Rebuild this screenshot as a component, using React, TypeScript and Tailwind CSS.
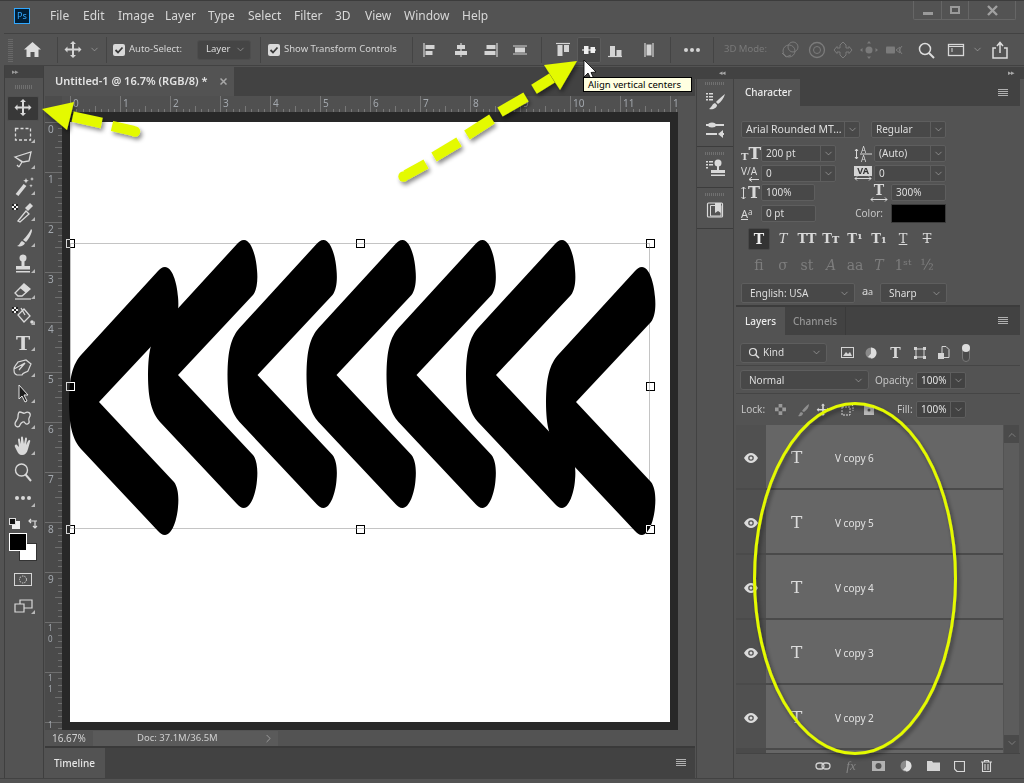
import { ChevronDown, ChevronRight, ChevronUp } from "lucide-react";
import type { ReactNode } from "react";

const menu = [
  { label: "File", w: "w-[33px]" },
  { label: "Edit", w: "w-[35px]" },
  { label: "Image", w: "w-[47px]" },
  { label: "Layer", w: "w-[43px]" },
  { label: "Type", w: "w-[40px]" },
  { label: "Select", w: "w-[46px]" },
  { label: "Filter", w: "w-[41px]" },
  { label: "3D", w: "w-[30px]" },
  { label: "View", w: "w-[39px]" },
  { label: "Window", w: "w-[58px]" },
  { label: "Help", w: "w-[40px]" },
];

// all little drawings are centred on 0,0
function Ico({ size = 26, className = "", children }: { size?: number; className?: string; children: ReactNode }) {
  const h = size / 2;
  return (
    <svg width={size} height={size} viewBox={`${-h} ${-h} ${size} ${size}`} className={className} fill="currentColor">
      {children}
    </svg>
  );
}

const Corner = () => <path d="M12 5v4h-4z" fill="#b8b8b8" />;
const Checker = ({ x, y }: { x: number; y: number }) => (
  <g>
    <rect x={x} y={y} width="6" height="6" fill="#eee" />
    <path d={`M${x} ${y}h2v2h-2zM${x + 4} ${y}h2v2h-2zM${x + 2} ${y + 2}h2v2h-2zM${x} ${y + 4}h2v2h-2zM${x + 4} ${y + 4}h2v2h-2z`} fill="#222" />
  </g>
);

const moveArrows = "M0-9l-3 3h2v4.500h-4.500v-2l-3 3 3 3v-2h4.500v4.500h-2l3 3 3-3h-2v-4.500h4.500v2l3-3-3-3v2h-4.500v-4.500h2z";

const tools: ReactNode[] = [
  <path d={moveArrows} />,
  <>
    <rect x="-7.500" y="-5.500" width="15" height="11.500" fill="none" stroke="currentColor" strokeWidth="1.300" strokeDasharray="3 2" />
    <Corner />
  </>,
  <>
    <path d="M-8-3 L8-8 L6 1 L0 2 Z M-8-3 L-1 2 L-4 7 M-4 7l-2-2" fill="none" stroke="currentColor" strokeWidth="1.300" />
    <Corner />
  </>,
  <>
    <path d="M-6 9 L2-1" stroke="currentColor" strokeWidth="3.500" />
    <path d="M3-8l.8 2 2 .8-2 .8-.8 2-.8-2-2-.8 2-.8zM9-9l.6 1.400 1.400.6-1.400.6-.6 1.400-.6-1.400-1.400-.6 1.400-.6zM8-2l.5 1.200 1.200.5-1.200.5-.5 1.200-.5-1.200-1.200-.5 1.200-.5z" />
    <Corner />
  </>,
  <>
    <path d="M-5 9 L3-1 L6 2 L-3 10 Z" fill="none" stroke="currentColor" strokeWidth="1.300" />
    <path d="M2-4 L7-9 L10-6 L5-1 Z" />
    <Checker x={-11} y={-8} />
    <Corner />
  </>,
  <>
    <path d="M8-9 C7-6 3-1 0 2 L3 4 C6 1 9-5 9-8Z M-1 3 C-3 4-3 7-6 8 C-3 9 1 8 2 5Z" />
    <Corner />
  </>,
  <>
    <circle cx="0" cy="-6" r="3.500" />
    <rect x="-1.500" y="-3" width="3" height="5" />
    <rect x="-7" y="2" width="14" height="3.500" />
    <rect x="-7" y="7" width="14" height="1.500" />
    <Corner />
  </>,
  <>
    <path d="M-8 3 L1-6 L7-1 L-1 6 L-5 6 Z" fill="none" stroke="currentColor" strokeWidth="1.300" />
    <path d="M-3-2 L1-6 L7-1 L3 3 Z" />
    <path d="M-8 9h16" stroke="currentColor" strokeWidth="1.200" />
    <Corner />
  </>,
  <>
    <path d="M-5-1 L1-7 L7 0 L1 6 Z M2-1 L-2-8" fill="none" stroke="currentColor" strokeWidth="1.300" />
    <circle cx="9" cy="6" r="1.800" />
    <Checker x={-11} y={-9} />
    <Corner />
  </>,
  <>
    <text x="0" y="8" textAnchor="middle" className="[font-family:'DejaVu_Serif',serif] font-bold text-[19px]">T</text>
    <Corner />
  </>,
  <>
    <path d="M-9 1 C-9-2-6-4-5-6 L3-8 L8-4 L5 3 C3 5 0 4-1 7 L-6 7 C-9 6-9 4-9 1Z M-9 1 L2-5 M-4 2 L2-5" fill="none" stroke="currentColor" strokeWidth="1.200" />
    <Corner />
  </>,
  <>
    <path d="M-4-9 L-4 5 L-1 2 L2 8 L4 7 L1 1 L5 1 Z" fill="#1d1d1d" stroke="#e4e4e4" strokeWidth="1" />
    <Corner />
  </>,
  <>
    <path d="M-3-8 C-1-8 0-6 2-7 C5-9 8-7 7-4 C6-2 5-1 6 1 C7 4 3 5 2 3 C1 1-2 2-3 5 C-4 8-8 7-8 4 C-8 1-5 0-5-3 C-5-5-5-8-3-8Z" fill="none" stroke="currentColor" strokeWidth="1.300" />
    <Corner />
  </>,
  <>
    <path d="M-8 1 C-9-1-7-2-6-1 L-4 1 L-5-6 C-5-8-3-8-3-6 L-2-2 L-2-8 C-2-10 0-10 0-8 L1-2 L2-7 C2-9 4-9 4-7 L3-1 L5-5 C6-7 8-6 7-4 L5 3 C4 7 2 9-1 9 C-4 9-5 7-6 5Z" />
    <Corner />
  </>,
  <>
    <circle cx="-1.500" cy="-2" r="6" fill="none" stroke="currentColor" strokeWidth="1.400" />
    <path d="M3-2 M2.500 2.500 L8 9" stroke="currentColor" strokeWidth="2" />
  </>,
  <>
    <circle cx="-6" cy="0" r="2" />
    <circle cx="0" cy="0" r="2" />
    <circle cx="6" cy="0" r="2" />
    <Corner />
  </>,
];

function AlignIcon({ d, line }: { d: string; line: string }) {
  return (
    <Ico size={20}>
      <path d={line} stroke="currentColor" strokeWidth="1.200" fill="none" />
      <path d={d} />
    </Ico>
  );
}

function Sep() {
  return <div className="w-px h-[26px] bg-[#444444] shrink-0" />;
}

function Check({ className = "" }: { className?: string }) {
  return (
    <div className={`w-[12px] h-[12px] rounded-[2px] bg-[#d9d9d9] flex items-center justify-center shrink-0 ${className}`}>
      <svg width="10" height="10" viewBox="0 0 10 10"><path d="M1.500 5l2.500 2.500 4.500-5" fill="none" stroke="#3a3a3a" strokeWidth="1.800" /></svg>
    </div>
  );
}

function Chev({ className = "" }: { className?: string }) {
  return <ChevronDown size={11} strokeWidth={1.300} className={`text-[#b5b5b5] ${className}`} />;
}

function Select({ w, h = "h-[17px]", children, split = true }: { w: string; h?: string; children: ReactNode; split?: boolean }) {
  return (
    <div className={`${w} ${h} flex items-center shrink-0 rounded-[2px] border border-[#5e5e5e] bg-[#484848] text-[#dedede]`}>
      <div className="flex-1 min-w-0 pl-[4px] truncate flex items-center">{children}</div>
      <div className={`w-[15px] h-full flex items-center justify-center ${split ? "border-l border-[#5e5e5e]" : ""}`}>
        <Chev />
      </div>
    </div>
  );
}

function Field({ w, children }: { w: string; children: ReactNode }) {
  return <div className={`${w} h-[17px] flex items-center shrink-0 pl-[4px] rounded-[2px] border border-[#5e5e5e] bg-[#484848] text-[#dedede]`}>{children}</div>;
}

function Slab({ size, className = "" }: { size: string; className?: string }) {
  return <span className={`[font-family:'DejaVu_Serif',serif] font-bold leading-none ${size} ${className}`}>T</span>;
}

function PanelMenu() {
  return (
    <svg width="12" height="8" viewBox="0 0 12 8" className="text-[#b0b0b0]">
      <path d="M1 .5h10M1 2.500h10M1 4.500h10M1 6.500h10" stroke="currentColor" />
    </svg>
  );
}

function Eye() {
  return (
    <svg width="14" height="10" viewBox="0 0 14 10">
      <path d="M0 5C2 1.500 4.500 0 7 0s5 1.500 7 5c-2 3.500-4.500 5-7 5S2 8.500 0 5z" fill="#dcdcdc" />
      <circle cx="7" cy="5" r="2.800" fill="#535353" />
      <circle cx="7" cy="5" r="1.500" fill="#dcdcdc" />
    </svg>
  );
}

function TopRuler() {
  const ticks = Array.from({ length: 100 }, (_, i) => i);
  return (
    <svg width="616" height="17" className="block bg-[#505050]">
      <path d="M0 16.500h616" stroke="#3c3c3c" />
      {ticks.map((i) => {
        const x = Math.round(8 + i * 6.25) + 0.5;
        const major = i % 8 === 0;
        const mid = i % 4 === 0;
        return <path key={i} d={`M${x} ${major ? 0 : mid ? 10 : 13}V16`} stroke="#777777" />;
      })}
      {["0", "1", "2", "3", "4", "5", "6", "7", "8", "9", "10", "11", "1"].map((t, i) => (
        <text key={i} x={8 + i * 50 + 3} y="11" fontSize="10" fill="#a3a8ae">{t}</text>
      ))}
    </svg>
  );
}

function LeftRuler() {
  const ticks = Array.from({ length: 100 }, (_, i) => i);
  return (
    <svg width="17" height="618" className="block bg-[#4a4a4a] shrink-0">
      {ticks.map((i) => {
        const y = Math.round(10 + i * 6.25) + 0.5;
        const major = i % 8 === 0;
        const mid = i % 4 === 0;
        return <path key={i} d={`M${major ? 0 : mid ? 10 : 13} ${y}H17`} stroke="#6e6e6e" />;
      })}
      {["0", "1", "2", "3", "4", "5", "6", "7", "8", "9"].map((t, i) => (
        <text key={i} x="3" y={10 + i * 50 + 11} fontSize="10" fill="#a3a8ae">{t}</text>
      ))}
      {[10, 11].map((n) => (
        <g key={n}>
          <text x="3" y={10 + n * 50 + 9} fontSize="8" fill="#a3a8ae">1</text>
          <text x="3" y={10 + n * 50 + 20} fontSize="8" fill="#a3a8ae">{n - 10}</text>
        </g>
      ))}
      <text x="3" y="616" fontSize="8" fill="#a3a8ae">1</text>
    </svg>
  );
}

const chevron =
  "M0 0 L75-80 C79-85 80-95 79-105 C78-120 73-135 66-135 C63-135 61-133 59-131 L-18-47 C-26-38-30-25-30 0 C-30 25-26 38-18 47 L59 129 C61 131 63 133 66 133 C73 133 78 118 79 105 C80 95 79 85 75 80 Z";

function Chevrons() {
  const places = [
    [29, 280],
    [108, 253],
    [187.500, 253],
    [266.500, 253],
    [346.500, 253],
    [426, 253],
    [506, 280],
  ];
  return (
    <svg width="600" height="600" className="absolute left-0 top-0 overflow-visible">
      {places.map(([x, y]) => (
        <path key={x} d={chevron} transform={`translate(${x} ${y})`} fill="#000" />
      ))}
    </svg>
  );
}

function Handle({ className }: { className: string }) {
  return <div className={`absolute w-[9px] h-[9px] border border-white mix-blend-difference ${className}`} />;
}

function LayerRow({ name }: { name: string }) {
  return (
    <div className="flex h-[65px] shrink-0">
      <div className="w-[30px] h-[63px] flex items-center justify-center pt-[3px] bg-[#505050]"><Eye /></div>
      <div className="w-[237px] h-[63px] bg-[#666666] flex items-center pt-[3px]">
        <span className="w-[69px] pl-[25px] [font-family:'DejaVu_Serif',serif] text-[17px] text-[#dcdcdc]">T</span>
        <span className="text-[10px] text-[#e2e2e2]">{name}</span>
      </div>
    </div>
  );
}

function Annotations() {
  const dashes = [
    "M72.700 116.700L101.700 123",
    "M112 126L134 131",
    "M534 89.300L552 78",
    "M500 112L526 97",
    "M467 135L492 119",
    "M434 157L459 142",
    "M426 164L406 175",
  ];
  return (
    <svg width="1024" height="783" className="absolute left-0 top-0 pointer-events-none">
      <defs>
        <filter id="sh" x="-20%" y="-20%" width="140%" height="140%">
          <feDropShadow dx="2" dy="3" stdDeviation="2" floodColor="#000" floodOpacity="0.45" />
        </filter>
      </defs>
      <g filter="url(#sh)">
        <path d="M42 109L74 102L67 130Z" fill="#e4fa00" />
        <path d="M577 61L544 65L560 90Z" fill="#e4fa00" />
        {dashes.map((d) => (
          <path key={d} d={d} stroke="#e4fa00" strokeWidth="10.500" fill="none" />
        ))}
        <circle cx="403.500" cy="176.500" r="5.200" fill="#e4fa00" />
        <circle cx="135" cy="131.500" r="5.200" fill="#e4fa00" />
        <ellipse cx="855" cy="578.500" rx="100.500" ry="175" fill="none" stroke="#e4fa00" strokeWidth="3" />
      </g>
      <path d="M584 60V77L588 73L591.500 80L594 79L591 72.500L596 72Z" fill="#fff" stroke="#000" strokeWidth="0.800" />
    </svg>
  );
}

export default function App() {
  return (
    <div className="relative w-[1024px] h-[783px] overflow-hidden bg-[#535353] text-[#d9d9d9] text-[10px] [font-family:'Noto_Sans',sans-serif]">
      {/* menu bar */}
      <div className="h-[33px] flex items-center border-t border-[#3c3c3c] relative">
        <div className="ml-[14px] w-[16px] h-[16px] mt-[-2px] border border-[#31a8ff] bg-[#001e36] text-[#31a8ff] text-[9px] leading-[14px] text-center shrink-0">Ps</div>
        <div className="ml-[20px] flex items-center text-[12px] text-[#d8d8d8] mt-[-2px]">
          {menu.map((m) => (
            <span key={m.label} className={`${m.w} shrink-0`}>{m.label}</span>
          ))}
        </div>
        <div className="absolute right-[8px] top-0 h-[19px] flex border-x border-b border-[#666666] rounded-b-[2px]">
          <div className="w-[28px] flex items-center justify-center border-r border-[#666666]"><div className="w-[10px] h-[3px] mt-[6px] bg-[#9a9a9a]" /></div>
          <div className="w-[27px] flex items-center justify-center border-r border-[#666666]"><div className="w-[10px] h-[8px] border-2 border-[#9a9a9a]" /></div>
          <div className="w-[46px] flex items-center justify-center text-[#a0a0a0]">
            <svg width="11" height="11" viewBox="0 0 11 11"><path d="M1 1l9 9M10 1l-9 9" stroke="currentColor" strokeWidth="2.400" /></svg>
          </div>
        </div>
      </div>

      {/* options bar */}
      <div className="ml-[4px] h-[33px] flex items-center border-y border-[#424242] text-[#d4d4d4] text-[9.5px]">
        <div className="w-[13px] h-[24px] pl-[4px] shrink-0"><div className="w-[5px] h-full bg-[repeating-linear-gradient(0deg,#686868_0_1px,transparent_1px_2px)]" /></div>
        <div className="w-[30px] flex justify-center shrink-0">
          <svg width="17" height="15" viewBox="0 0 17 15"><path d="M8.500 0L0 7.500h2.500V15h4v-5h4v5h4V7.500H17z" fill="#dcdcdc" /></svg>
        </div>
        <div className="w-[10px] shrink-0" />
        <Sep />
        <div className="w-[30px] flex justify-center shrink-0"><Ico size={20}><path d={moveArrows} /></Ico></div>
        <div className="w-[12px] flex justify-center shrink-0"><Chev className="text-[#999999]" /></div>
        <div className="w-[6px] shrink-0" />
        <Sep />
        <Check className="ml-[6px]" />
        <span className="ml-[4px] w-[60px] shrink-0 whitespace-nowrap">Auto-Select:</span>
        <div className="ml-[8px] w-[54px] h-[20px] shrink-0 flex items-center justify-between pl-[8px] pr-[4px] rounded-[3px] border border-[#4d4d4d] bg-[#454545]">
          <span className="text-[#dedede]">Layer</span>
          <Chev />
        </div>
        <div className="w-[9px] shrink-0" />
        <Sep />
        <Check className="ml-[7px]" />
        <span className="ml-[4px] w-[122px] shrink-0 whitespace-nowrap">Show Transform Controls</span>
        <div className="w-[6px] shrink-0" />
        <Sep />
        <div className="w-[2px] shrink-0" />
        <div className="w-[30px] flex justify-center shrink-0"><AlignIcon line="M-6-7V7" d="M-4.500-5h9v4h-9zM-4.500 1h7v4h-7z" /></div>
        <div className="w-[31px] flex justify-center shrink-0"><AlignIcon line="M0-7V7" d="M-4-5h8v4h-8zM-6 1h12v4h-12z" /></div>
        <div className="w-[29px] flex justify-center shrink-0"><AlignIcon line="M6-7V7" d="M-4.500-5h9v4h-9zM-6.500 1h11v4h-11z" /></div>
        <div className="w-[30px] flex justify-center shrink-0"><AlignIcon line="M-7-4h14M-7 4h14" d="M-5-2.500h10v5h-10z" /></div>
        <div className="w-[6px] shrink-0" />
        <Sep />
        <div className="ml-[8px] w-[26px] flex justify-center shrink-0"><AlignIcon line="M-7-6.500h14" d="M-5.500-5h5v11h-5zM1-5h5v7h-5z" /></div>
        <div className="ml-[1px] w-[24px] h-[26px] flex items-center justify-center shrink-0 rounded-[2px] border border-[#5c5c5c] bg-[#474747] text-[#f0f0f0]"><AlignIcon line="M-7 0h14" d="M-5-4h4.500v8h-4.500zM1.500-3h4.500v6h-4.500z" /></div>
        <div className="ml-[1px] w-[26px] flex justify-center shrink-0"><AlignIcon line="M-7 6.500h14" d="M-5-4h5v10h-5zM1.500 0h5v6h-5z" /></div>
        <div className="ml-[8px] w-[26px] flex justify-center shrink-0"><AlignIcon line="M-4-7V7M4-7V7" d="M-2.500-5.500h5v11h-5z" /></div>
        <div className="w-[8px] shrink-0" />
        <Sep />
        <div className="w-[42px] flex justify-center shrink-0"><Ico size={20}><circle cx="-6" r="2" /><circle r="2" /><circle cx="6" r="2" /></Ico></div>
        <Sep />
        <span className="ml-[10px] w-[54px] shrink-0 text-[#797979] whitespace-nowrap">3D Mode:</span>
        <div className="flex text-[#7b7b7b]">
          <div className="w-[26px] flex justify-center"><Ico size={22} ><circle cx="-2" cy="1" r="6" fill="none" stroke="currentColor" /><circle cx="2" cy="-3" r="5" fill="none" stroke="currentColor" /><path d="M-9 3l4 4 5-2" fill="none" stroke="currentColor" /></Ico></div>
          <div className="w-[26px] flex justify-center"><Ico size={22}><circle r="7.500" fill="none" stroke="currentColor" strokeWidth="1.300" /><circle r="3.500" fill="none" stroke="currentColor" /></Ico></div>
          <div className="w-[26px] flex justify-center"><Ico size={22}><path d="M0-8l-3 3v3h-3v-1.500l-3 3.500 3 3.500V2h3v3l3 3 3-3V2h3v1.500l3-3.500-3-3.500V-2H3v-3z" fill="none" stroke="currentColor" /></Ico></div>
          <div className="w-[26px] flex justify-center"><Ico size={22}><circle r="3.500" /><path d="M0-9l-2 2.500h4zM0 9l-2-2.500h4zM-9 0l2.500-2v4zM9 0l-2.500-2v4z" /></Ico></div>
          <div className="w-[26px] flex justify-center"><Ico size={22}><rect x="-9" y="-3.500" width="9" height="7" rx="1" /><path d="M1 0l4-3v6zM7-4l-3 4 3 4" fill="none" stroke="currentColor" /></Ico></div>
        </div>
        <div className="w-[36px] flex justify-center shrink-0">
          <Ico size={20} className="text-[#dddddd]"><circle cx="-1" cy="-1" r="5.500" fill="none" stroke="currentColor" strokeWidth="1.500" /><path d="M3-.5 M3 3l5 5" stroke="currentColor" strokeWidth="2" /></Ico>
        </div>
        <div className="w-[24px] flex justify-center shrink-0">
          <Ico size={20} className="text-[#d8d8d8]"><rect x="-7.500" y="-5.500" width="15" height="11" fill="none" stroke="currentColor" strokeWidth="1.300" /><path d="M-7.500-3.500h15" stroke="currentColor" /><path d="M-5-1.500h2v1h-2zM-5 .5h2v1h-2z" /></Ico>
        </div>
        <div className="w-[18px] flex justify-center shrink-0"><Chev /></div>
        <div className="w-[28px] flex justify-center shrink-0">
          <Ico size={20} className="text-[#dcdcdc]"><path d="M-4-2h-3V8H7V-2H4" fill="none" stroke="currentColor" strokeWidth="1.500" /><path d="M0 3V-7M-3-4l3-3.500L3-4" fill="none" stroke="currentColor" strokeWidth="1.500" /></Ico>
        </div>
      </div>

      {/* workspace */}
      <div className="flex h-[713px] border-b border-[#424242]">
        {/* tools */}
        <div className="ml-[4px] w-[40px] shrink-0 flex flex-col border-x border-[#3f3f3f]">
          <div className="h-[12px] bg-[#424242] pl-[7px] text-[#999999] text-[7px] leading-[11px] tracking-[-1px] shrink-0">▸▸</div>
          <div className="h-[17px] flex items-center justify-center shrink-0"><div className="w-[18px] h-[4px] bg-[repeating-linear-gradient(90deg,#707070_0_1px,transparent_1px_2px)]" /></div>
          <div className="flex flex-col items-center pr-[2px]">
            {tools.map((t, i) => (
              <div key={i} className="h-[26px] w-full flex items-center justify-center">
                <div className={`h-[25px] w-[32px] flex items-center justify-center rounded-[2px] ${i === 0 ? "bg-[#383838] border border-[#505050]" : ""}`}>
                  <Ico className="shrink-0">{t}</Ico>
                </div>
              </div>
            ))}
          </div>
          <div className="mt-[2px] h-[20px] flex items-center justify-center gap-[8px] pr-[1px]">
            <svg width="11" height="11" viewBox="0 0 11 11"><rect x="3" y="3" width="8" height="8" fill="#eee" /><rect x=".5" y=".5" width="6" height="6" fill="#111" stroke="#ddd" /></svg>
            <svg width="11" height="11" viewBox="0 0 11 11"><path d="M1 3h8M3 1L1 3l2 2M7 10V3M5 8l2 2 2-2" fill="none" stroke="#ddd" strokeWidth="1.200" /></svg>
          </div>
          <div className="relative h-[29px] mt-[1px] ml-[4px]">
            <div className="absolute left-[10px] top-[9px] w-[18px] h-[18px] bg-white border border-[#333333]" />
            <div className="absolute left-0 top-[-1px] w-[18px] h-[18px] bg-black border border-white" />
          </div>
          <div className="mt-[3px] h-[26px] flex items-center justify-center pr-[2px]">
            <svg width="18" height="13" viewBox="0 0 18 13"><rect x=".5" y=".5" width="17" height="12" fill="none" stroke="#d6d6d6" /><circle cx="9" cy="6.500" r="3.500" fill="none" stroke="#d6d6d6" strokeDasharray="1.500 1" /></svg>
          </div>
          <div className="h-[26px] flex items-center justify-center pr-[2px]">
            <Ico><path d="M-8-1h9v8h-9zM-3-1v-4h12v8h-8" fill="none" stroke="currentColor" strokeWidth="1.200" /><Corner /></Ico>
          </div>
        </div>

        {/* document */}
        <div className="w-[651px] pl-px shrink-0 flex flex-col">
          <div className="h-[29px] shrink-0 bg-[#424242] flex mt-px">
            <div className="w-[189px] bg-[#535353] flex items-center pl-[10px] text-[11px] font-semibold text-[#e3e3e3]">
              <span className="w-[165px] whitespace-nowrap">Untitled-1 @ 16.7% (RGB/8) *</span>
              <svg width="7" height="7" viewBox="0 0 7 7"><path d="M.5.5l6 6M6.500.5l-6 6" stroke="#a8a8a8" strokeWidth="1.500" /></svg>
            </div>
          </div>
          <div className="flex h-[16px] overflow-hidden">
            <div className="w-[17px] bg-[#4c4c4c]" />
            <TopRuler />
          </div>
          <div className="flex h-[619px] overflow-hidden">
            <LeftRuler />
            <div className="w-[616px] h-[618px] bg-[#282828] pl-[8px] pt-[10px]">
              <div className="relative w-[600px] h-[600px] bg-white">
                <div className="absolute left-0 top-[121px] w-[580px] h-[286px] border border-[#c4c4c4]" />
                <Chevrons />
                <Handle className="left-[-4px] top-[117px]" />
                <Handle className="left-[286px] top-[117px]" />
                <Handle className="left-[576px] top-[117px]" />
                <Handle className="left-[-4px] top-[260px]" />
                <Handle className="left-[576px] top-[260px]" />
                <Handle className="left-[-4px] top-[403px]" />
                <Handle className="left-[286px] top-[403px]" />
                <Handle className="left-[576px] top-[403px]" />
              </div>
            </div>
          </div>
          <div className="h-[15px] flex items-center text-[#d2d2d2]">
            <span className="w-[48px] pl-[7px] shrink-0">16.67%</span>
            <div className="w-[185px] h-full bg-[#5a5a5a] flex items-center pl-[44px] justify-between pr-[3px] text-[9.5px]">
              <span className="text-[#cfcfcf]">Doc: 37.1M/36.5M</span>
              <ChevronRight size={13} strokeWidth={1} />
            </div>
          </div>
          <div className="h-[2px] bg-[#3a3a3a]" />
          <div className="h-[30px] bg-[#424242] flex">
            <div className="w-[60px] bg-[#535353] flex items-center pl-[9px] font-medium text-[#e6e6e6]">Timeline</div>
            <div className="flex-1 flex items-center justify-end pr-[8px]"><PanelMenu /></div>
          </div>
        </div>

        {/* right dock */}
        <div className="flex-1 flex flex-col min-w-0">
          <div className="h-[12px] mt-px bg-[#424242] flex items-center justify-between pl-[24px] pr-[10px] text-[#a8a8a8] text-[7px] tracking-[-1px] shrink-0">
            <span>◂◂</span><span>▸▸</span>
          </div>
          <div className="flex flex-1 min-h-0">
            <div className="ml-px w-[38px] shrink-0 flex flex-col border-x border-[#424242]">
              <div className="h-[68px] flex flex-col items-center border-b border-[#3c3c3c] pt-[3px]">
                <div className="w-[20px] h-[3px] bg-[repeating-linear-gradient(90deg,#707070_0_1px,transparent_1px_2px)]" />
                <Ico size={22} className="mt-[6px]"><path d="M-9-9h2v1.500h-2zM-6-9h4v1.500h-4zM-9-6h2v1.500h-2zM-6-6h4v1.500h-4zM-9-3h2v1.500h-2zM-6-3h4v1.500h-4z" /><path d="M10-8C7-6 4-3 1 0L3 2C6 0 9-4 10-8ZM0 1C-3 2-3 5-6 7C-2 8 2 6 2 3Z" /></Ico>
                <Ico size={22} className="mt-[6px]"><path d="M-9-5h6M-1-5H9M-9 4H2M7 4h2" stroke="currentColor" strokeWidth="1.800" /><ellipse cx="-3" cy="-5" rx="4" ry="2.500" /><path d="M3 4l5-4v8z" /></Ico>
              </div>
              <div className="h-[41px] flex flex-col items-center border-b border-[#3c3c3c] pt-[5px]">
                <div className="w-[20px] h-[3px] bg-[repeating-linear-gradient(90deg,#707070_0_1px,transparent_1px_2px)]" />
                <Ico size={22} className="mt-[2px]"><path d="M-9-7h2v1.500h-2zM-6-7h4v1.500h-4zM-9-4h2v1.500h-2zM-6-4h4v1.500h-4zM-9-1h2v1.500h-2z" /><circle cx="3" cy="-5" r="3.500" /><rect x="2" y="-3" width="2" height="5" /><rect x="-4" y="2" width="14" height="3" /><rect x="-4" y="6.500" width="14" height="1.500" /></Ico>
              </div>
              <div className="h-[41px] flex flex-col items-center border-b border-[#3c3c3c] pt-[5px]">
                <div className="w-[20px] h-[3px] bg-[repeating-linear-gradient(90deg,#707070_0_1px,transparent_1px_2px)]" />
                <Ico size={20} className="mt-[4px]"><rect x="-7.500" y="-7" width="15" height="14" rx="1" fill="none" stroke="currentColor" strokeWidth="1.200" /><path d="M-4.500-4.500H6V6H-4.500z" fill="none" stroke="currentColor" /><path d="M0-7h6V3L3 1 0 3z" /></Ico>
              </div>
            </div>

            <div className="ml-[2px] w-[284px] shrink-0 flex flex-col">
              {/* character panel */}
              <div className="h-[27px] bg-[#424242] flex shrink-0">
                <div className="w-[64px] bg-[#535353] pl-[9px] flex items-center font-medium text-[#ececec]">Character</div>
                <div className="flex-1 flex items-center justify-end pr-[11px]"><PanelMenu /></div>
              </div>
              <div className="h-[199px] shrink-0 pl-[5px]">
                <div className="mt-[15px] flex h-[17px]">
                  <Select w="w-[119px]"><span className="text-[10.5px]">Arial Rounded MT...</span></Select>
                  <div className="w-[11px]" />
                  <Select w="w-[75px]">Regular</Select>
                </div>
                <div className="mt-[7px] flex items-center h-[17px]">
                  <div className="w-[20px] flex items-end"><Slab size="text-[10px]" /><Slab size="text-[17px]" /></div>
                  <Select w="w-[75px]">200 pt</Select>
                  <div className="w-[38px] flex justify-end pr-[2px]">
                    <svg width="18" height="18" viewBox="0 0 18 18" className="text-[#d9d9d9]" fill="currentColor">
                      <text x="7" y="8" fontSize="8">A</text>
                      <text x="7" y="17" fontSize="8">A</text>
                      <path d="M6 9h12M2.500 4v10M1 6l1.500-2L4 6M1 12l1.500 2L4 12" fill="none" stroke="currentColor" />
                    </svg>
                  </div>
                  <Select w="w-[72px]">(Auto)</Select>
                </div>
                <div className="mt-[3px] flex items-center h-[17px]">
                  <svg width="20" height="17" viewBox="0 0 20 17" fill="#d9d9d9">
                    <text x="0" y="10" fontSize="10">V/A</text>
                    <path d="M8 14.500h10M8 14.500l3-2.500M8 14.500l3 2" fill="none" stroke="#d9d9d9" />
                  </svg>
                  <Select w="w-[75px]">0</Select>
                  <div className="w-[38px] flex flex-col items-end pr-[2px]">
                    <span className="bg-[#d4d4d4] w-[18px] text-center text-[9px] leading-[10px] font-bold text-[#333333]">VA</span>
                    <svg width="18" height="5" viewBox="0 0 18 5"><path d="M1 2.500h16M1 2.500l2-2M1 2.500l2 2M17 2.500l-2-2M17 2.500l-2 2" fill="none" stroke="#d9d9d9" /></svg>
                  </div>
                  <Select w="w-[72px]">0</Select>
                </div>
                <div className="mt-[2px] flex items-center h-[17px]">
                  <div className="w-[20px] flex items-center justify-end pr-[1px] gap-[2px]">
                    <svg width="5" height="14" viewBox="0 0 5 14"><path d="M2.500 1v12M.5 3l2-2 2 2M.5 11l2 2 2-2" fill="none" stroke="#d9d9d9" /></svg>
                    <Slab size="text-[16px]" />
                  </div>
                  <Field w="w-[54px]">100%</Field>
                  <div className="w-[76px] flex flex-col items-end pr-[3px]">
                    <div className="w-[18px] flex justify-center"><Slab size="text-[14px]" /></div>
                    <svg width="18" height="5" viewBox="0 0 18 5"><path d="M1 2.500h16M1 2.500l2-2M1 2.500l2 2M17 2.500l-2-2M17 2.500l-2 2" fill="none" stroke="#d9d9d9" /></svg>
                  </div>
                  <Field w="w-[55px]">300%</Field>
                </div>
                <div className="mt-[4px] flex items-center h-[17px]">
                  <div className="w-[20px] text-[11px] leading-none"><span className="underline">A</span><span className="text-[8px] align-top">a</span></div>
                  <Field w="w-[55px]">0 pt</Field>
                  <div className="w-[75px] text-right pr-[8px] text-[#c6c6c6]">Color:</div>
                  <div className="w-[55px] h-[19px] bg-black border border-[#3a3a3a]" />
                </div>
                <div className="mt-[5px] ml-[6px] flex items-center h-[23px]">
                  <div className="w-[24px] h-[23px] flex items-center justify-center"><div className="w-[22px] h-[22px] bg-[#333333] border border-[#484848] rounded-[2px] flex items-center justify-center"><Slab size="text-[14px]" className="text-[#eeeeee]" /></div></div>
                  {["T", "TT", "Tт", "T¹", "T₁", "T", "T"].map((t, i) => (
                    <div key={i} className={`w-[24px] flex justify-center [font-family:'DejaVu_Serif',serif] font-bold text-[13px] ${i === 0 ? "italic font-normal" : ""} ${i === 5 ? "underline font-normal" : ""} ${i === 6 ? "line-through font-normal" : ""}`}>{t}</div>
                  ))}
                </div>
                <div className="mt-[4px] ml-[6px] flex items-center h-[23px] text-[#7d7d7d] [font-family:'DejaVu_Serif',serif] text-[14px]">
                  {["fi", "σ", "st", "A", "aa", "T", "1ˢᵗ", "½"].map((t, i) => (
                    <div key={i} className={`w-[24px] flex justify-center whitespace-nowrap ${i === 3 || i === 5 ? "italic" : ""}`}>{t}</div>
                  ))}
                </div>
                <div className="mt-[6px] flex items-center">
                  <div className="w-[114px] h-[20px] flex items-center justify-between pl-[8px] pr-[4px] rounded-[2px] border border-[#5e5e5e] bg-[#484848] text-[#dedede]">English: USA<Chev /></div>
                  <div className="w-[25px] text-center text-[11px] mt-[-3px]">a<span className="text-[9px]">a</span></div>
                  <div className="w-[67px] h-[20px] flex items-center justify-between pl-[8px] pr-[4px] rounded-[2px] border border-[#5e5e5e] bg-[#484848] text-[#dedede]">Sharp<Chev /></div>
                </div>
              </div>

              <div className="h-[2px] bg-[#3c3c3c] shrink-0" />

              {/* layers panel */}
              <div className="h-[28px] bg-[#424242] flex shrink-0">
                <div className="w-[49px] bg-[#535353] pl-[9px] flex items-center font-medium text-[#ececec]">Layers</div>
                <div className="w-[61px] pl-[8px] flex items-center border-r border-[#3a3a3a] font-medium text-[#969696]">Channels</div>
                <div className="flex-1 flex items-center justify-end pr-[11px]"><PanelMenu /></div>
              </div>
              <div className="h-[31px] flex items-center pl-[4px] border-b border-[#454545] pt-[5px] shrink-0">
                <div className="w-[87px] h-[20px] flex items-center justify-between pl-[7px] pr-[4px] rounded-[3px] border border-[#5e5e5e] bg-[#484848] text-[#dedede]">
                  <span className="flex items-center gap-[3px]">
                    <Ico size={12}><circle cx="-1" cy="-1" r="3.500" fill="none" stroke="currentColor" strokeWidth="1.200" /><path d="M1.500 1.500l3.500 3.500" stroke="currentColor" strokeWidth="1.500" /></Ico>
                    Kind
                  </span>
                  <Chev />
                </div>
                <div className="ml-[8px] w-[24px] flex justify-center">
                  <svg width="13" height="11" viewBox="0 0 13 11"><rect x=".5" y=".5" width="12" height="10" fill="none" stroke="#d4d4d4" /><path d="M2 9l3-4 2 2 2-2 2 4z" fill="#d4d4d4" /></svg>
                </div>
                <div className="w-[24px] flex justify-center">
                  <svg width="12" height="12" viewBox="0 0 12 12"><circle cx="6" cy="6" r="5.500" fill="#8a8a8a" /><path d="M6 .5a5.500 5.500 0 0 1 0 11z M3 10L10 2a5.500 5.500 0 0 1-7 8z" fill="#dddddd" /></svg>
                </div>
                <div className="w-[25px] flex justify-center"><Slab size="text-[14px]" /></div>
                <div className="w-[24px] flex justify-center">
                  <svg width="12" height="12" viewBox="0 0 12 12"><rect x="2" y="2" width="8" height="8" fill="none" stroke="#d4d4d4" /><path d="M0 0h3v3H0zM9 0h3v3H9zM0 9h3v3H0zM9 9h3v3H9z" fill="#d4d4d4" /></svg>
                </div>
                <div className="w-[24px] flex justify-center">
                  <svg width="12" height="13" viewBox="0 0 12 13"><path d="M4 .5h4l3 3v8H4z" fill="none" stroke="#d4d4d4" /><rect x="0" y="7" width="6" height="6" fill="#d4d4d4" /></svg>
                </div>
                <div className="w-[20px] flex justify-center">
                  <div className="relative w-[8px] h-[18px] rounded-full border border-[#777777] bg-[#4a4a4a]"><div className="absolute left-[-1px] top-[-1px] w-[8px] h-[8px] rounded-full bg-[#dcdcdc]" /></div>
                </div>
              </div>
              <div className="h-[28px] flex items-center pl-[4px] pt-px border-b border-[#454545] shrink-0">
                <div className="w-[129px] h-[20px] flex items-center justify-between pl-[8px] pr-[4px] rounded-[3px] border border-[#5e5e5e] bg-[#484848] text-[#dedede]">Normal<Chev /></div>
                <span className="ml-[6px] w-[41px] text-[#c4c4c4]">Opacity:</span>
                <div className="w-[50px] h-[17px] flex items-center rounded-[2px] border border-[#5e5e5e] bg-[#424242] text-[#e2e2e2]">
                  <span className="flex-1 pl-[4px]">100%</span>
                  <span className="w-[15px] h-full flex items-center justify-center border-l border-[#5e5e5e]"><Chev /></span>
                </div>
              </div>
              <div className="h-[31px] flex items-center pl-[5px] shrink-0">
                <span className="w-[28px] text-[#c4c4c4]">Lock:</span>
                <div className="w-[22px] flex justify-center">
                  <svg width="11" height="11" viewBox="0 0 11 11"><rect width="11" height="11" fill="#9a9a9a" /><path d="M0 0h3.600v3.600H0zM7.300 0H11v3.600H7.300zM3.600 3.600h3.700v3.700H3.600zM0 7.300h3.600V11H0zM7.300 7.300H11V11H7.300z" fill="#505050" /></svg>
                </div>
                <div className="w-[23px] flex justify-center text-[#8f8f8f]">
                  <Ico size={14}><path d="M6-6C3-4 1-2-1 1L1 2C4 0 6-3 6-6ZM-2 2C-4 3-3 5-5 6C-2 7 0 5 0 3Z" /></Ico>
                </div>
                <div className="w-[18px] flex justify-center"><Ico size={14}><path d="M0-6.500l-2 2h1.200v3.500h-3.500v-1.200l-2 2 2 2v-1.200h3.500v3.500h-1.200l2 2 2-2h-1.200v-3.500h3.500v1.200l2-2-2-2v1.200H.8v-3.500H2z" /></Ico></div>
                <div className="w-[30px] flex justify-center"><Ico size={14}><path d="M-5-3H3V5H-5zM-1-6h5l2 2v5" fill="none" stroke="currentColor" strokeDasharray="2 1" /></Ico></div>
                <div className="w-[14px] flex justify-center">
                  <svg width="10" height="10" viewBox="0 0 10 10"><rect width="10" height="10" fill="#b9b9b9" /><circle cx="5" cy="5" r="1.500" fill="#535353" /></svg>
                </div>
                <span className="ml-[21px] w-[19px] text-[#c4c4c4]">Fill:</span>
                <div className="w-[50px] h-[17px] flex items-center rounded-[2px] border border-[#5e5e5e] bg-[#424242] text-[#e2e2e2]">
                  <span className="flex-1 pl-[4px]">100%</span>
                  <span className="w-[15px] h-full flex items-center justify-center border-l border-[#5e5e5e]"><Chev /></span>
                </div>
              </div>
              <div className="h-[328px] flex shrink-0 overflow-hidden">
                <div className="w-[267px] flex flex-col bg-[#4a4a4a]">
                  {["V copy 6", "V copy 5", "V copy 4", "V copy 3", "V copy 2"].map((n) => (
                    <LayerRow key={n} name={n} />
                  ))}
                  <div className="ml-[30px] h-[4px] bg-[#666666]" />
                </div>
                <div className="ml-px w-[15px] bg-[#4a4a4a] flex flex-col items-center justify-between py-[4px] text-[#7d7d7d]">
                  <ChevronUp size={12} />
                  <div className="flex-1 w-full my-[2px] bg-[#5c5c5c]" />
                  <ChevronDown size={12} />
                </div>
              </div>
              <div className="h-[25px] flex items-center bg-[#535353] border-t border-[#444444] pl-[73px] text-[#d4d4d4] shrink-0">
                <div className="w-[28px] flex justify-center"><Ico size={16}><rect x="-7" y="-3" width="8" height="6" rx="3" fill="none" stroke="currentColor" strokeWidth="1.300" /><rect x="-1" y="-3" width="8" height="6" rx="3" fill="none" stroke="currentColor" strokeWidth="1.300" /></Ico></div>
                <div className="w-[28px] flex justify-center text-[13px] italic [font-family:'Liberation_Serif',serif] text-[#868686]">fx</div>
                <div className="w-[26px] flex justify-center"><svg width="13" height="10" viewBox="0 0 13 10"><rect width="13" height="10" fill="#b2b2b2" /><circle cx="6.500" cy="5" r="3" fill="#535353" /></svg></div>
                <div className="w-[29px] flex justify-center"><svg width="12" height="12" viewBox="0 0 12 12"><circle cx="6" cy="6" r="5.500" fill="#8a8a8a" /><path d="M6 .5a5.500 5.500 0 0 1 0 11z M3 10L10 2a5.500 5.500 0 0 1-7 8z" fill="#e0e0e0" /></svg></div>
                <div className="w-[26px] flex justify-center"><svg width="13" height="10" viewBox="0 0 13 10"><path d="M0 0h5l1 1.500h7V10H0z" fill="#d4d4d4" /></svg></div>
                <div className="w-[27px] flex justify-center"><svg width="11" height="11" viewBox="0 0 11 11"><path d="M.5.500h10v10H3L.5 8z" fill="none" stroke="#d8d8d8" strokeWidth="1.200" /></svg></div>
                <div className="w-[26px] flex justify-center"><svg width="11" height="12" viewBox="0 0 11 12"><path d="M0 2h11M3.500 2V.5h4V2M1.500 2v9.500h8V2M4 4v6M7 4v6" fill="none" stroke="#d8d8d8" strokeWidth="1.100" /></svg></div>
              </div>
            </div>
          </div>
        </div>
      </div>

      <Annotations />
      <div className="absolute left-[583px] top-[77px] w-[109px] h-[15px] bg-[#ffffe1] border border-black text-black text-[9.5px] leading-[13px] pl-[4px] whitespace-nowrap">Align vertical centers</div>
    </div>
  );
}
